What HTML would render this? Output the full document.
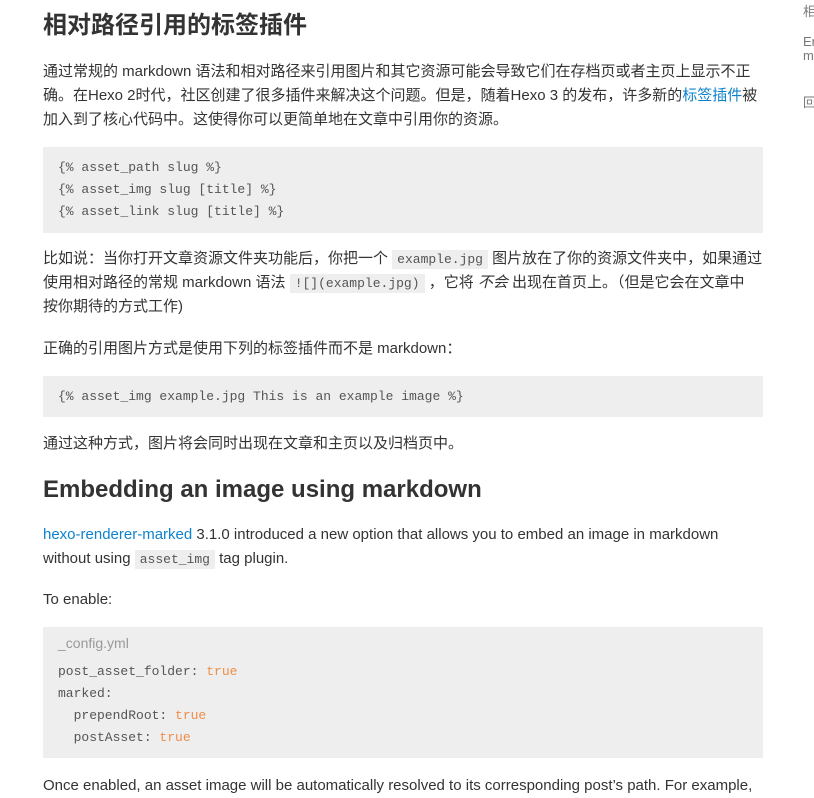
<!DOCTYPE html>
<html><head><meta charset="utf-8"><style>
body{margin:0;width:814px;height:795px;overflow:hidden;background:#fff;font-family:"Liberation Sans","Noto Sans CJK SC",sans-serif;color:#333;font-size:15px}
.a{position:absolute;white-space:nowrap;line-height:24px}
.h{position:absolute;font-weight:bold;font-size:24px;color:#333;line-height:30px;white-space:nowrap}
.pre{position:absolute;left:43px;width:720px;background:#eee}
.m{font-family:"Liberation Mono",monospace;font-size:13px;color:#555}
.c{position:absolute;left:58px;line-height:22px;white-space:pre}
code{font-family:"Liberation Mono",monospace;font-size:13px;background:#eee;padding:2px 5px;color:#555}
a{color:#0e83cd;text-decoration:none}
.t{color:#f08d49}
.s{position:absolute;left:803px;font-size:13px;color:#777;line-height:14px}
</style></head><body>
<div class="h" style="left:43px;top:11px">相对路径引用的标签插件</div>
<div class="a" style="left:43px;top:60px">通过常规的 markdown 语法和相对路径来引用图片和其它资源可能会导致它们在存档页或者主页上显示不正</div>
<div class="a" style="left:43px;top:84px">确。在Hexo 2时代，社区创建了很多插件来解决这个问题。但是，随着Hexo 3 的发布，许多新的<a>标签插件</a>被</div>
<div class="a" style="left:43px;top:108px">加入到了核心代码中。这使得你可以更简单地在文章中引用你的资源。</div>
<div class="pre" style="top:147px;height:86px"></div>
<div class="c m" style="top:157px">{% asset_path slug %}
{% asset_img slug [title] %}
{% asset_link slug [title] %}</div>
<div class="a" style="left:43px;top:247px">比如说：当你打开文章资源文件夹功能后，你把一个 <code>example.jpg</code> 图片放在了你的资源文件夹中，如果通过</div>
<div class="a" style="left:43px;top:271px">使用相对路径的常规 markdown 语法 <code>![](example.jpg)</code> ，它将 <i>不会</i> 出现在首页上。（但是它会在文章中</div>
<div class="a" style="left:43px;top:295px">按你期待的方式工作)</div>
<div class="a" style="left:43px;top:337px">正确的引用图片方式是使用下列的标签插件而不是 markdown：</div>
<div class="pre" style="top:376px;height:41px"></div>
<div class="c m" style="top:386px">{% asset_img example.jpg This is an example image %}</div>
<div class="a" style="left:43px;top:432px">通过这种方式，图片将会同时出现在文章和主页以及归档页中。</div>
<div class="h" style="left:43px;top:475px">Embedding an image using markdown</div>
<div class="a" style="left:43px;top:523px"><a>hexo-renderer-marked</a> 3.1.0 introduced a new option that allows you to embed an image in markdown</div>
<div class="a" style="left:43px;top:547px">without using <code>asset_img</code> tag plugin.</div>
<div class="a" style="left:43px;top:588px">To enable:</div>
<div class="pre" style="top:627px;height:131px"></div>
<div class="a" style="left:58px;top:631px;font-size:14px;color:#999">_config.yml</div>
<div class="c m" style="top:661px">post_asset_folder: <span class="t">true</span>
marked:
  prependRoot: <span class="t">true</span>
  postAsset: <span class="t">true</span></div>
<div class="a" style="left:43px;top:774px">Once enabled, an asset image will be automatically resolved to its corresponding post’s path. For example,</div>
<div class="s" style="top:5px">相</div>
<div class="s" style="top:35px">En<br>m</div>
<div class="s" style="top:96px">回</div>
</body></html>
